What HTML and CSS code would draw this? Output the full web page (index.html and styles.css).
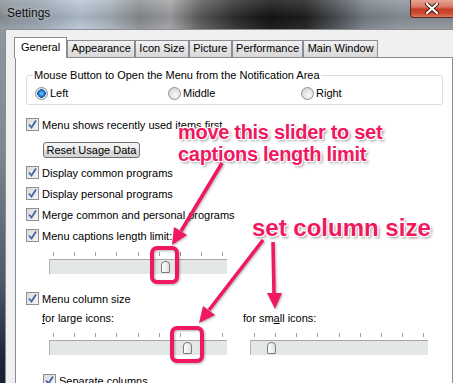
FILE: index.html
```html
<!DOCTYPE html>
<html lang="en">
<head>
  <meta charset="UTF-8" />
  <title>Settings</title>
  <link rel="stylesheet" href="styles.css">
</head>
<body>
<div class="window">
  <div class="titlebar">
    <span class="title">Settings</span>
    <span class="close">
      <svg width="14" height="11" viewBox="0 0 14 11"><path d="M2 1 L12 10 M12 1 L2 10" stroke="#3a1a14" stroke-width="4" stroke-linecap="round"/><path d="M2 1 L12 10 M12 1 L2 10" stroke="#fff" stroke-width="2.2" stroke-linecap="round"/></svg>
    </span>
  </div>

  <div class="frame">
    <div class="edge left"></div>
    <div class="client">
      <div class="tabs">
        <div class="tab active">General</div>
        <div class="tab">Appearance</div>
        <div class="tab">Icon Size</div>
        <div class="tab">Picture</div>
        <div class="tab">Performance</div>
        <div class="tab">Main Window</div>
      </div>

      <div class="panel">
        <fieldset class="group">
          <legend>Mouse Button to Open the Menu from the Notification Area</legend>
          <div class="radios">
            <label class="radio checked"><span class="dot"></span>Left</label>
            <label class="radio"><span class="dot"></span>Middle</label>
            <label class="radio"><span class="dot"></span>Right</label>
          </div>
        </fieldset>

        <div class="check-row recent"><span class="box"><svg width="11" height="11" viewBox="0 0 11 11"><path d="M2 5.5 L4.5 8.5 L9 1.5" fill="none" stroke="#4465a8" stroke-width="1.8"/></svg></span>Menu shows recently used items first</div>
        <button class="btn">Reset Usage Data</button>
        <div class="check-row first"><span class="box"><svg width="11" height="11" viewBox="0 0 11 11"><path d="M2 5.5 L4.5 8.5 L9 1.5" fill="none" stroke="#4465a8" stroke-width="1.8"/></svg></span>Display common programs</div>
        <div class="check-row"><span class="box"><svg width="11" height="11" viewBox="0 0 11 11"><path d="M2 5.5 L4.5 8.5 L9 1.5" fill="none" stroke="#4465a8" stroke-width="1.8"/></svg></span>Display personal programs</div>
        <div class="check-row"><span class="box"><svg width="11" height="11" viewBox="0 0 11 11"><path d="M2 5.5 L4.5 8.5 L9 1.5" fill="none" stroke="#4465a8" stroke-width="1.8"/></svg></span>Merge common and personal programs</div>
        <div class="check-row"><span class="box"><svg width="11" height="11" viewBox="0 0 11 11"><path d="M2 5.5 L4.5 8.5 L9 1.5" fill="none" stroke="#4465a8" stroke-width="1.8"/></svg></span>Menu captions length limit:</div>

        <div class="slider captions">
          <div class="ticks"><i></i><i></i><i></i><i></i><i></i><i></i><i></i><i></i><i></i></div>
          <div class="track"><span class="thumb" style="left:111px"></span></div>
        </div>

        <div class="check-row columns"><span class="box"><svg width="11" height="11" viewBox="0 0 11 11"><path d="M2 5.5 L4.5 8.5 L9 1.5" fill="none" stroke="#4465a8" stroke-width="1.8"/></svg></span>Menu column size</div>

        <div class="size-cols">
          <div class="size-col">
            <div class="size-label"><u>f</u>or large icons:</div>
            <div class="slider">
              <div class="ticks"><i></i><i></i><i></i><i></i><i></i><i></i><i></i><i></i><i></i></div>
              <div class="track"><span class="thumb" style="left:133px"></span></div>
            </div>
          </div>
          <div class="size-col">
            <div class="size-label">for sm<u>a</u>ll icons:</div>
            <div class="slider">
              <div class="ticks"><i></i><i></i><i></i><i></i><i></i><i></i><i></i><i></i><i></i></div>
              <div class="track"><span class="thumb" style="left:16px"></span></div>
            </div>
          </div>
        </div>

        <div class="check-row separate"><span class="box"><svg width="11" height="11" viewBox="0 0 11 11"><path d="M2 5.5 L4.5 8.5 L9 1.5" fill="none" stroke="#4465a8" stroke-width="1.8"/></svg></span>Separate columns</div>
      </div>
    </div>
    <div class="edge right"></div>
  </div>

  <!-- annotations drawn over the dialog -->
  <div class="note note-slider">move this slider to set<br>captions length limit</div>
  <div class="note note-column">set column size</div>

  <svg class="marks" width="453" height="383" viewBox="0 0 453 383">
    <g fill="none" stroke="#f0185f" stroke-width="4">
      <rect x="152" y="248" width="25" height="34" rx="5"/>
      <rect x="172" y="328" width="30" height="33" rx="5"/>
    </g>
    <g stroke="#f0185f" stroke-width="3.5" fill="#f0185f">
      <line x1="222" y1="163" x2="181" y2="231"/>
      <polygon points="172,245 187,235 174,227" stroke="none"/>
      <line x1="263" y1="240" x2="209" y2="310"/>
      <polygon points="199,323 215,315 203,306" stroke="none"/>
      <line x1="273" y1="242" x2="274" y2="295"/>
      <polygon points="275,309 282,293 267,293" stroke="none"/>
    </g>
  </svg>
</div>
</body>
</html>
```

FILE: styles.css
```css
* {
  box-sizing: border-box;
}

body {
  margin: 0;
  width: 453px;
  height: 383px;
  overflow: hidden;
  font-family: 'Liberation Sans', Arial, sans-serif;
  font-size: 11px;
  color: #000;
}

.window {
  position: relative;
  width: 453px;
  height: 383px;
  display: flex;
  flex-direction: column;
}

/* Glass title bar */
.titlebar {
  height: 29px;
  flex: none;
  display: flex;
  justify-content: space-between;
  background:
    linear-gradient(to bottom, rgba(255,255,255,0.15), rgba(0,0,0,0.1) 60%, rgba(255,255,255,0.05)),
    linear-gradient(to right, #8d969d 0, #9aa7b3 40px, #b9c8d6 80px, #a9b4be 110px, #8c8f93 140px, #a3a4a6 170px, #5d5d5e 200px, #303030 235px, #141414 270px, #1f1f20 305px, #4a4e53 335px, #7b828a 365px, #8e959c 400px, #90979d 453px);
}

.title {
  padding: 6px 0 0 7px;
  font-size: 12px;
  line-height: 14px;
  color: #111;
  text-shadow: 0 0 6px rgba(255,255,255,0.7);
}

.close {
  width: 43px;
  height: 18px;
  display: flex;
  align-items: center;
  justify-content: center;
  border: 1px solid #5a2a22;
  border-top: none;
  border-right: none;
  border-radius: 0 0 0 4px;
  background: linear-gradient(to bottom, #e8a596 0, #d67a69 40%, #c43a22 55%, #cf4b31 80%, #e07a5c 100%);
}

.frame {
  flex: 1;
  display: flex;
  min-height: 0;
}

.edge {
  flex: none;
  background: linear-gradient(to bottom, #8e979e 0, #7c8892 120px, #4c5a6a 250px, #1b2638 330px, #0f1828 383px);
}

.edge.left {
  width: 5px;
}

.edge.right {
  width: 3px;
  background: #9aa0a6;
}

.client {
  flex: 1;
  background: #f0f0f0;
  border-top: 1px solid #8a8d92;
  border-left: 1px solid #8a8d92;
  border-right: 1px solid #8a8d92;
  padding: 7px 3px 0 8px;
  display: flex;
  flex-direction: column;
}

/* Tabs */
.tabs {
  display: flex;
  align-items: flex-end;
  height: 20px;
}

.tab {
  height: 17px;
  padding: 0 3.3px;
  line-height: 15px;
  border: 1px solid #898c95;
  border-bottom: none;
  background: linear-gradient(to bottom, #f2f2f2, #e3e3e3 50%, #d9d9d9);
  white-space: nowrap;
}

.tab.active {
  position: relative;
  z-index: 1;
  height: 21px;
  margin-bottom: -1px;
  padding: 0 6px;
  line-height: 18px;
  background: #fff;
}

.panel {
  flex: 1;
  margin-left: 1px;
  background: #fff;
  border: 1px solid #898c95;
  padding-top: 10px;
}

/* Group box */
.group {
  margin: 0 9px 0 10px;
  padding: 0 8px 4px;
  border: 1px solid #d5dfe5;
  border-radius: 3px;
}

.group legend {
  padding: 0 1px;
  margin-left: -2px;
  line-height: 14px;
}

.radios {
  display: grid;
  grid-template-columns: 133px 133px 133px;
  margin-top: 4px;
  height: 14px;
}

.radio {
  display: flex;
  align-items: center;
}

.dot {
  width: 13px;
  height: 13px;
  margin-right: 2px;
  border-radius: 50%;
  border: 1px solid #8e8f8f;
  background: radial-gradient(circle at 60% 65%, #fafafa 0, #e4e4e4 45%, #cfcfcf 100%);
}

.radio.checked .dot {
  background: radial-gradient(circle at 50% 50%, #7ccbff 0, #1f7fd8 35%, #0f4c9c 52%, #dfe6ee 56%, #f5f5f5 100%);
}

/* Check rows */
.check-row {
  display: flex;
  align-items: center;
  height: 21px;
  padding-left: 10px;
  white-space: nowrap;
}

.check-row.recent {
  margin-top: 9px;
}

.check-row.first {
  margin-top: 4px;
}

.check-row.columns {
  margin-top: 14px;
}

.check-row.separate {
  margin-top: 15px;
  padding-left: 27px;
}

.box {
  width: 13px;
  height: 13px;
  flex: none;
  margin-right: 3px;
  border: 1px solid #8e8f8f;
  background: linear-gradient(135deg, #dadada, #f6f6f6);
  display: flex;
  align-items: center;
  justify-content: center;
}

.btn {
  display: block;
  margin: 7px 0 0 27px;
  width: 97px;
  height: 16px;
  padding: 0;
  font: inherit;
  color: #000;
  line-height: 14px;
  border: 1px solid #707070;
  border-radius: 3px;
  background: linear-gradient(to bottom, #f4f4f4 0, #ececec 50%, #dedede 51%, #d3d3d3 100%);
}

/* Trackbars */
.slider {
  width: 178px;
}

.slider.captions {
  margin: 6px 0 0 33px;
}

.ticks {
  display: flex;
  justify-content: space-between;
  padding: 0 4px;
  height: 4px;
  margin-bottom: 3px;
}

.ticks i {
  width: 1px;
  height: 4px;
  background: #a0a0a0;
}

.track {
  position: relative;
  height: 15px;
  background: #e4e7e7;
  border-top: 1px solid #a8a8a8;
  border-left: 1px solid #b4b4b4;
}

.thumb {
  position: absolute;
  top: 1px;
  width: 9px;
  height: 12px;
  border: 1px solid #7b7b7b;
  border-radius: 4px 4px 1px 1px;
  background: linear-gradient(to right, #fdfdfd, #e2e2e2);
}

.size-cols {
  display: grid;
  grid-template-columns: 201px 201px;
  margin: 2px 0 0 26px;
}

.size-label {
  line-height: 14px;
  margin-bottom: 8px;
}

.size-col .slider {
  margin-left: 7px;
}

/* Annotations */
.note {
  position: absolute;
  font-weight: bold;
  color: #f0185f;
  white-space: nowrap;
  text-shadow: -1px -1px 0 #fff, 1px -1px 0 #fff, -1px 1px 0 #fff, 1px 1px 0 #fff, 2px 2px 3px rgba(0,0,0,0.45);
}

.note-slider {
  left: 178px;
  top: 121px;
  font-size: 20px;
  line-height: 22px;
  letter-spacing: -0.3px;
}

.note-column {
  left: 252px;
  top: 215px;
  font-size: 24px;
  line-height: 26px;
}

.marks {
  position: absolute;
  left: 0;
  top: 0;
  pointer-events: none;
  filter: drop-shadow(1px 1px 1px rgba(0,0,0,0.3));
}
```
